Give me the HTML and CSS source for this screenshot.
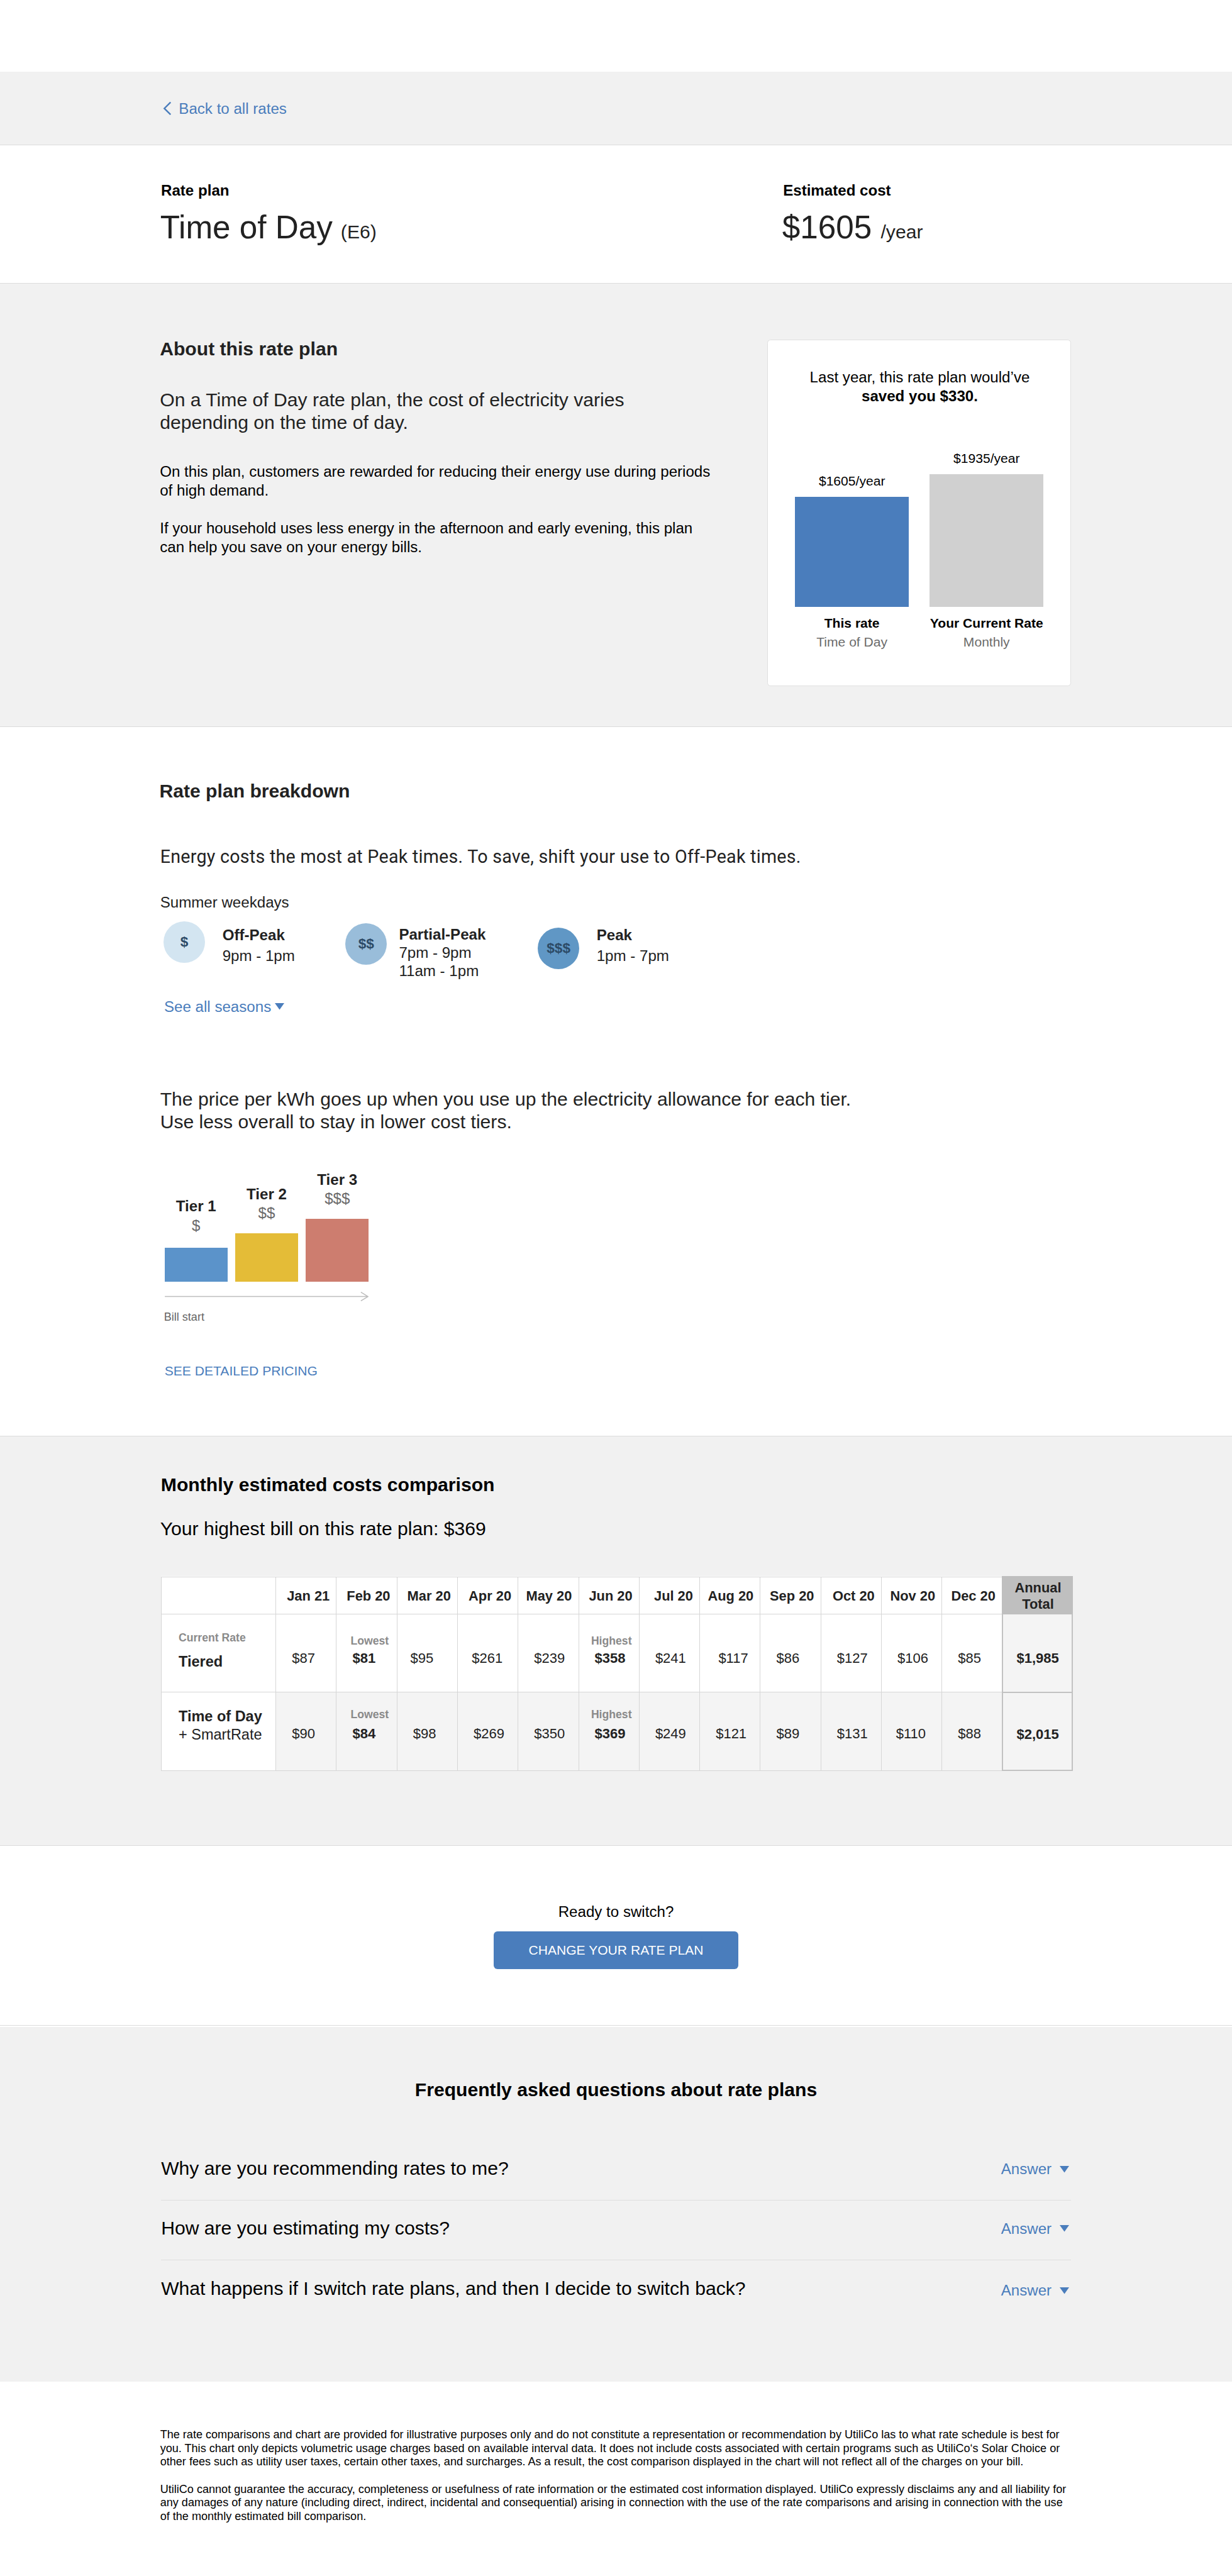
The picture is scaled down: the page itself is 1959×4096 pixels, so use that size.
FILE: index.html
```html
<!DOCTYPE html>
<html lang="en">
<head>
    <meta charset="UTF-8">
    <meta name="viewport" content="width=device-width, initial-scale=1.0">
    <title>Rate plan: Time of Day (E6)</title>
    <link rel="stylesheet" href="styles.css">
</head>
<body>
    <nav class="back-bar">
        <a class="back-link" href="#">
            <svg class="chevron" viewBox="0 0 9 15"><path d="M8 1 L1.5 7.5 L8 14"/></svg>
            Back to all rates
        </a>
    </nav>

    <header class="summary">
        <div class="summary-item">
            <div class="summary-label">Rate plan</div>
            <h1 class="summary-value">Time of Day <small class="plan-code">(E6)</small></h1>
        </div>
        <div class="summary-item">
            <div class="summary-label">Estimated cost</div>
            <div class="summary-value">$1605 <small>/year</small></div>
        </div>
    </header>

    <section class="about">
        <div class="about-text">
            <h2>About this rate plan</h2>
            <p class="lead">On a Time of Day rate plan, the cost of electricity varies<br>depending on the time of day.</p>
            <p>On this plan, customers are rewarded for reducing their energy use during periods<br>of high demand.</p>
            <p>If your household uses less energy in the afternoon and early evening, this plan<br>can help you save on your energy bills.</p>
        </div>
        <div class="savings-card">
            <div class="savings-title">Last year, this rate plan would’ve<br><strong>saved you $330.</strong></div>
            <div class="savings-chart">
                <div class="savings-col">
                    <div class="savings-value">$1605/year</div>
                    <div class="savings-bar bar-this"></div>
                    <strong>This rate</strong>
                    <span>Time of Day</span>
                </div>
                <div class="savings-col">
                    <div class="savings-value">$1935/year</div>
                    <div class="savings-bar bar-current"></div>
                    <strong>Your Current Rate</strong>
                    <span>Monthly</span>
                </div>
            </div>
        </div>
    </section>

    <section class="breakdown">
        <h2>Rate plan breakdown</h2>
        <p class="peak-lead">Energy costs the most at Peak times. To save, shift your use to Off-Peak times.</p>
        <div class="season">Summer weekdays</div>
        <div class="periods">
            <div class="period off-peak">
                <div class="price-dot">$</div>
                <div class="period-text"><strong>Off-Peak</strong><br>9pm - 1pm</div>
            </div>
            <div class="period partial-peak">
                <div class="price-dot">$$</div>
                <div class="period-text"><strong>Partial-Peak</strong><br>7pm - 9pm<br>11am - 1pm</div>
            </div>
            <div class="period peak">
                <div class="price-dot">$$$</div>
                <div class="period-text"><strong>Peak</strong><br>1pm - 7pm</div>
            </div>
        </div>
        <a class="seasons-link" href="#">See all seasons
            <svg class="triangle" viewBox="0 0 10 7"><path d="M0 0 H10 L5 7 Z"/></svg>
        </a>

        <p class="tier-lead">The price per kWh goes up when you use up the electricity allowance for each tier.<br>Use less overall to stay in lower cost tiers.</p>
        <div class="tiers">
            <div class="tier">
                <strong>Tier 1</strong>
                <span>$</span>
                <div class="tier-bar tier-1"></div>
            </div>
            <div class="tier">
                <strong>Tier 2</strong>
                <span>$$</span>
                <div class="tier-bar tier-2"></div>
            </div>
            <div class="tier">
                <strong>Tier 3</strong>
                <span>$$$</span>
                <div class="tier-bar tier-3"></div>
            </div>
        </div>
        <svg class="arrow" viewBox="0 0 215 10"><path d="M0 5 H214.5 M207 0.4 L214.5 5 L207 9.6"/></svg>
        <div class="bill-start">Bill start</div>
        <a class="pricing-link" href="#">SEE DETAILED PRICING</a>
    </section>

    <section class="comparison">
        <h2>Monthly estimated costs comparison</h2>
        <p class="lead">Your highest bill on this rate plan: $369</p>
        <table class="costs">
            <colgroup>
                <col class="col-name">
                <col class="col-month" span="12">
                <col class="col-total">
            </colgroup>
            <tr class="months">
                <th></th>
                <th>Jan 21</th>
                <th>Feb 20</th>
                <th>Mar 20</th>
                <th>Apr 20</th>
                <th>May 20</th>
                <th>Jun 20</th>
                <th>Jul 20</th>
                <th>Aug 20</th>
                <th>Sep 20</th>
                <th>Oct 20</th>
                <th>Nov 20</th>
                <th>Dec 20</th>
                <th class="total">Annual<br>Total</th>
            </tr>
            <tr class="current">
                <td class="plan"><div class="note">Current Rate</div><strong>Tiered</strong></td>
                <td>$87</td>
                <td class="marked"><div class="note">Lowest</div>$81</td>
                <td>$95</td>
                <td>$261</td>
                <td>$239</td>
                <td class="marked"><div class="note">Highest</div>$358</td>
                <td>$241</td>
                <td>$117</td>
                <td>$86</td>
                <td>$127</td>
                <td>$106</td>
                <td>$85</td>
                <td class="total">$1,985</td>
            </tr>
            <tr class="proposed">
                <td class="plan"><strong>Time of Day</strong><br>+ SmartRate</td>
                <td>$90</td>
                <td class="marked"><div class="note">Lowest</div>$84</td>
                <td>$98</td>
                <td>$269</td>
                <td>$350</td>
                <td class="marked"><div class="note">Highest</div>$369</td>
                <td>$249</td>
                <td>$121</td>
                <td>$89</td>
                <td>$131</td>
                <td>$110</td>
                <td>$88</td>
                <td class="total">$2,015</td>
            </tr>
        </table>
    </section>

    <section class="switch">
        <div>Ready to switch?</div>
        <button class="switch-button">CHANGE YOUR RATE PLAN</button>
    </section>

    <section class="faq">
        <h2>Frequently asked questions about rate plans</h2>
        <div class="faq-list">
            <div class="faq-item">
                <div class="question">Why are you recommending rates to me?</div>
                <a class="answer-link" href="#">Answer <svg class="triangle" viewBox="0 0 10 7"><path d="M0 0 H10 L5 7 Z"/></svg></a>
            </div>
            <div class="faq-item">
                <div class="question">How are you estimating my costs?</div>
                <a class="answer-link" href="#">Answer <svg class="triangle" viewBox="0 0 10 7"><path d="M0 0 H10 L5 7 Z"/></svg></a>
            </div>
            <div class="faq-item">
                <div class="question">What happens if I switch rate plans, and then I decide to switch back?</div>
                <a class="answer-link" href="#">Answer <svg class="triangle" viewBox="0 0 10 7"><path d="M0 0 H10 L5 7 Z"/></svg></a>
            </div>
        </div>
    </section>

    <footer class="disclaimer">
        <p>The rate comparisons and chart are provided for illustrative purposes only and do not constitute a representation or recommendation by UtiliCo las to what rate schedule is best for<br>you. This chart only depicts volumetric usage charges based on available interval data. It does not include costs associated with certain programs such as UtiliCo‘s Solar Choice or<br>other fees such as utility user taxes, certain other taxes, and surcharges. As a result, the cost comparison displayed in the chart will not reflect all of the charges on your bill.</p>
        <p>UtiliCo cannot guarantee the accuracy, completeness or usefulness of rate information or the estimated cost information displayed. UtiliCo expressly disclaims any and all liability for<br>any damages of any nature (including direct, indirect, incidental and consequential) arising in connection with the use of the rate comparisons and arising in connection with the use<br>of the monthly estimated bill comparison.</p>
    </footer>
</body>
</html>
```

FILE: styles.css
```css
* {
    margin: 0;
    padding: 0;
    box-sizing: border-box;
}

/* 1rem is 10 units of the 1300 unit wide layout */
html {
    font-size: calc(100vw / 130);
}

body {
    font-family: "Liberation Sans", Arial, sans-serif;
    font-size: 1.6rem;
    line-height: 2rem;
    color: #000;
    background-color: #fff;
    white-space: nowrap;
}

h2 {
    font-size: 2rem;
    line-height: 2.4rem;
    font-weight: bold;
}

a {
    color: #4a7dbc;
    text-decoration: none;
}

.lead {
    font-size: 2rem;
    line-height: 2.4rem;
}

.triangle {
    width: 1rem;
    height: 0.7rem;
    fill: #4a7dbc;
}

/* Back link */
.back-bar {
    margin-top: 7.59rem;
    height: 7.77rem;
    padding: 2.88rem 0 0 17.16rem;
    background-color: #f1f1f1;
    border-bottom: 1px solid #dcdcdc;
}

.back-link {
    display: flex;
    align-items: center;
    gap: 0.8rem;
}

.chevron {
    width: 0.91rem;
    height: 1.51rem;
    fill: none;
    stroke: #4a7dbc;
    stroke-width: 1.6;
}

/* Plan name and cost */
.summary {
    display: grid;
    grid-template-columns: 65.64rem 1fr;
    height: 14.59rem;
    padding: 3.72rem 0 0 16.9rem;
    border-bottom: 1px solid #dcdcdc;
}

.summary-label {
    font-weight: bold;
    padding-left: 0.09rem;
    margin-bottom: 0.95rem;
}

.summary-value {
    font-size: 3.4rem;
    line-height: 4rem;
    font-weight: normal;
    color: #222;
}

.summary-value small {
    font-size: 2rem;
}

.summary-value .plan-code {
    margin-left: -0.08rem;
}

/* About */
.about {
    display: flex;
    justify-content: space-between;
    align-items: flex-start;
    height: 46.79rem;
    padding: 5.66rem 16.98rem 0 16.87rem;
    background-color: #f1f1f1;
    border-bottom: 1px solid #dcdcdc;
}

.about h2,
.about .lead {
    color: #222;
}

.about .lead {
    margin: 3.01rem 0 2.94rem;
}

.about-text p + p {
    margin-bottom: 2rem;
}

.savings-card {
    width: 32.04rem;
    height: 36.52rem;
    margin-top: 0.25rem;
    padding: 2.9rem 2.85rem 0;
    background-color: #fff;
    border: 1px solid #e0e0e0;
    border-radius: 0.35rem;
}

.savings-title {
    text-align: center;
    padding-left: 0.1rem;
}

.savings-chart {
    display: flex;
    justify-content: space-between;
    align-items: flex-end;
    height: 25.88rem;
}

.savings-col {
    display: flex;
    flex-direction: column;
    align-items: center;
    width: 12rem;
    font-size: 1.4rem;
    line-height: 1.96rem;
}

.savings-col span {
    color: #6b6b6b;
}

.savings-value {
    line-height: 1.8rem;
}

.savings-bar {
    width: 12rem;
    margin: 0.78rem 0;
}

.bar-this {
    height: 11.58rem;
    background-color: #4a7dbc;
}

.bar-current {
    height: 14rem;
    background-color: #d0d0d0;
}

/* Breakdown */
.breakdown {
    height: 74.73rem;
    padding: 5.52rem 16.9rem 0;
    color: #222;
}

.breakdown h2 {
    margin-left: -0.08rem;
}

.peak-lead {
    margin: 4.55rem 0 2.62rem;
    font-family: Roboto, sans-serif;
    font-size: 1.9rem;
    line-height: 2.4rem;
    letter-spacing: 0.018rem;
}

.periods {
    display: flex;
    align-items: flex-start;
    height: 6.22rem;
    margin: 1rem 0 1.77rem 0.35rem;
}

.period {
    display: flex;
    align-items: flex-start;
}

.off-peak {
    width: 19.19rem;
}

.partial-peak {
    width: 20.3rem;
}

.price-dot {
    width: 4.4rem;
    height: 4.4rem;
    margin-right: 1.82rem;
    border-radius: 50%;
    font-size: 1.5rem;
    line-height: 4.4rem;
    font-weight: bold;
    text-align: center;
    color: #2c4a66;
}

.off-peak .price-dot {
    background-color: #d3e5f1;
}

.partial-peak .price-dot {
    margin-top: 0.2rem;
    margin-right: 1.26rem;
    background-color: #99bdda;
}

.peak .price-dot {
    margin-top: 0.64rem;
    background-color: #6097c5;
}

.period-text {
    margin-top: 0.31rem;
    line-height: 2.2rem;
}

.partial-peak .period-text {
    margin-top: 0.37rem;
    line-height: 1.95rem;
}

.seasons-link {
    display: flex;
    align-items: center;
    gap: 0.4rem;
    margin-left: 0.42rem;
}

.tier-lead {
    margin-top: 7.6rem;
    font-size: 2rem;
    line-height: 2.4rem;
}

.tiers {
    display: flex;
    align-items: flex-end;
    gap: 0.83rem;
    height: 11.81rem;
    margin: 3.84rem 0 1.05rem 0.48rem;
}

.tier {
    display: flex;
    flex-direction: column;
    align-items: center;
    width: 6.62rem;
}

.tier span {
    color: #6b6b6b;
}

.tier-bar {
    width: 6.62rem;
    margin-top: 1.15rem;
}

.tier-1 {
    height: 3.62rem;
    margin-top: 1.33rem;
    background-color: #5b93ca;
}

.tier-2 {
    height: 5.12rem;
    background-color: #e4bc37;
}

.tier-3 {
    height: 6.64rem;
    background-color: #cd7d6f;
}

.arrow {
    display: block;
    width: 21.5rem;
    height: 1rem;
    margin-left: 0.48rem;
    fill: none;
    stroke: #bdbdbd;
    stroke-width: 1;
}

.bill-start {
    margin: 0.86rem 0 3.9rem 0.4rem;
    font-size: 1.2rem;
    line-height: 1.6rem;
    color: #666;
}

.pricing-link {
    display: block;
    margin-left: 0.47rem;
    font-size: 1.4rem;
}

/* Monthly comparison */
.comparison {
    height: 43.3rem;
    padding: 3.92rem 16.9rem 0;
    background-color: #f1f1f1;
    border-top: 1px solid #dcdcdc;
    border-bottom: 1px solid #dcdcdc;
}

.comparison h2 {
    margin-left: 0.08rem;
}

.comparison .lead {
    margin: 2.25rem 0 3.82rem;
}

.costs {
    table-layout: fixed;
    width: 96.16rem;
    margin-left: 0.08rem;
    border-collapse: collapse;
    font-size: 1.46rem;
    line-height: 1.8rem;
    color: #222;
    background-color: #fff;
}

.col-name {
    width: 12.1rem;
}

.col-month {
    width: 6.39rem;
}

.col-total {
    width: 7.34rem;
}

.costs th,
.costs td {
    border: 1px solid #d6d6d6;
    text-align: left;
    vertical-align: top;
}

.costs th {
    height: 3.91rem;
    padding: 1.07rem 0.68rem 0 0;
    font-size: 1.45rem;
    text-align: right;
}

.costs td {
    height: 8.26rem;
    padding: 3.71rem 0 0 1.66rem;
}

.costs .marked {
    padding-top: 1.99rem;
    font-weight: bold;
}

.costs .note {
    margin-bottom: 0.12rem;
    font-size: 1.17rem;
    line-height: 1.6rem;
    font-weight: bold;
    color: #8a8a8a;
}

.costs .marked .note {
    margin-left: -0.2rem;
}

.costs .marked:nth-child(7) .note {
    margin-left: -0.38rem;
}

.costs .plan {
    padding: 1.65rem 0 0 1.8rem;
    font-size: 1.56rem;
    line-height: 1.92rem;
    background-color: #fff;
}

.costs .plan .note {
    margin-bottom: 0.8rem;
}

.costs .proposed td {
    padding-top: 3.45rem;
    background-color: #f4f4f4;
}

.costs .proposed .marked {
    padding-top: 1.5rem;
}

.costs .proposed .marked .note {
    margin-bottom: 0.35rem;
}

.costs .proposed .plan {
    padding-top: 1.58rem;
    background-color: #fff;
}

/* amounts that sit a little off the common left edge */
.costs .current td:nth-child(4) {
    padding-left: 1.38rem;
}

.costs .current td:nth-child(5) {
    padding-left: 1.47rem;
}

.costs .current td:nth-child(9) {
    padding-left: 1.94rem;
}

.costs .proposed td:nth-child(12) {
    padding-left: 1.51rem;
}

.costs .current .total,
.costs .proposed .total,
.costs .months .total {
    padding-left: 0.1rem;
    border: 2px solid #c2c2c2;
    background-color: #f4f4f4;
    text-align: center;
    font-weight: bold;
}

.costs .months .total {
    padding: 0.27rem 0 0 0.15rem;
    line-height: 1.67rem;
    background-color: #bfbfbf;
    border-color: #bfbfbf;
}

/* Switch */
.switch {
    display: flex;
    flex-direction: column;
    align-items: center;
    height: 18.98rem;
    padding-top: 5.96rem;
    border-bottom: 1px solid #dcdcdc;
}

.switch-button {
    width: 25.81rem;
    height: 4.01rem;
    margin-top: 1.04rem;
    border: none;
    border-radius: 0.4rem;
    background-color: #4a7dbc;
    color: #fff;
    font-family: inherit;
    font-size: 1.4rem;
    cursor: pointer;
}

/* FAQ */
.faq {
    height: 37.39rem;
    margin-top: 0.15rem;
    padding: 5.45rem 17rem 0;
    background-color: #f1f1f1;
}

.faq h2 {
    text-align: center;
    margin-bottom: 4.12rem;
}

.faq-item {
    display: flex;
    justify-content: space-between;
    align-items: flex-start;
    height: 6.33rem;
    padding: 1.75rem 0.19rem 0 0;
    border-bottom: 1px solid #dedede;
}

.faq-item:last-child {
    border-bottom: none;
}

.question {
    font-size: 2rem;
    line-height: 2.4rem;
}

.answer-link {
    display: flex;
    align-items: center;
    gap: 0.85rem;
    margin-top: 0.3rem;
}

.faq-item:nth-child(2) .answer-link {
    margin-top: 0.21rem;
}

.faq-item:last-child .answer-link {
    margin-top: 0.44rem;
}

/* Disclaimer */
.disclaimer {
    padding: 4.92rem 16.9rem 0;
    font-size: 1.2rem;
    line-height: 1.44rem;
}

.disclaimer p + p {
    margin-top: 1.44rem;
}
```
